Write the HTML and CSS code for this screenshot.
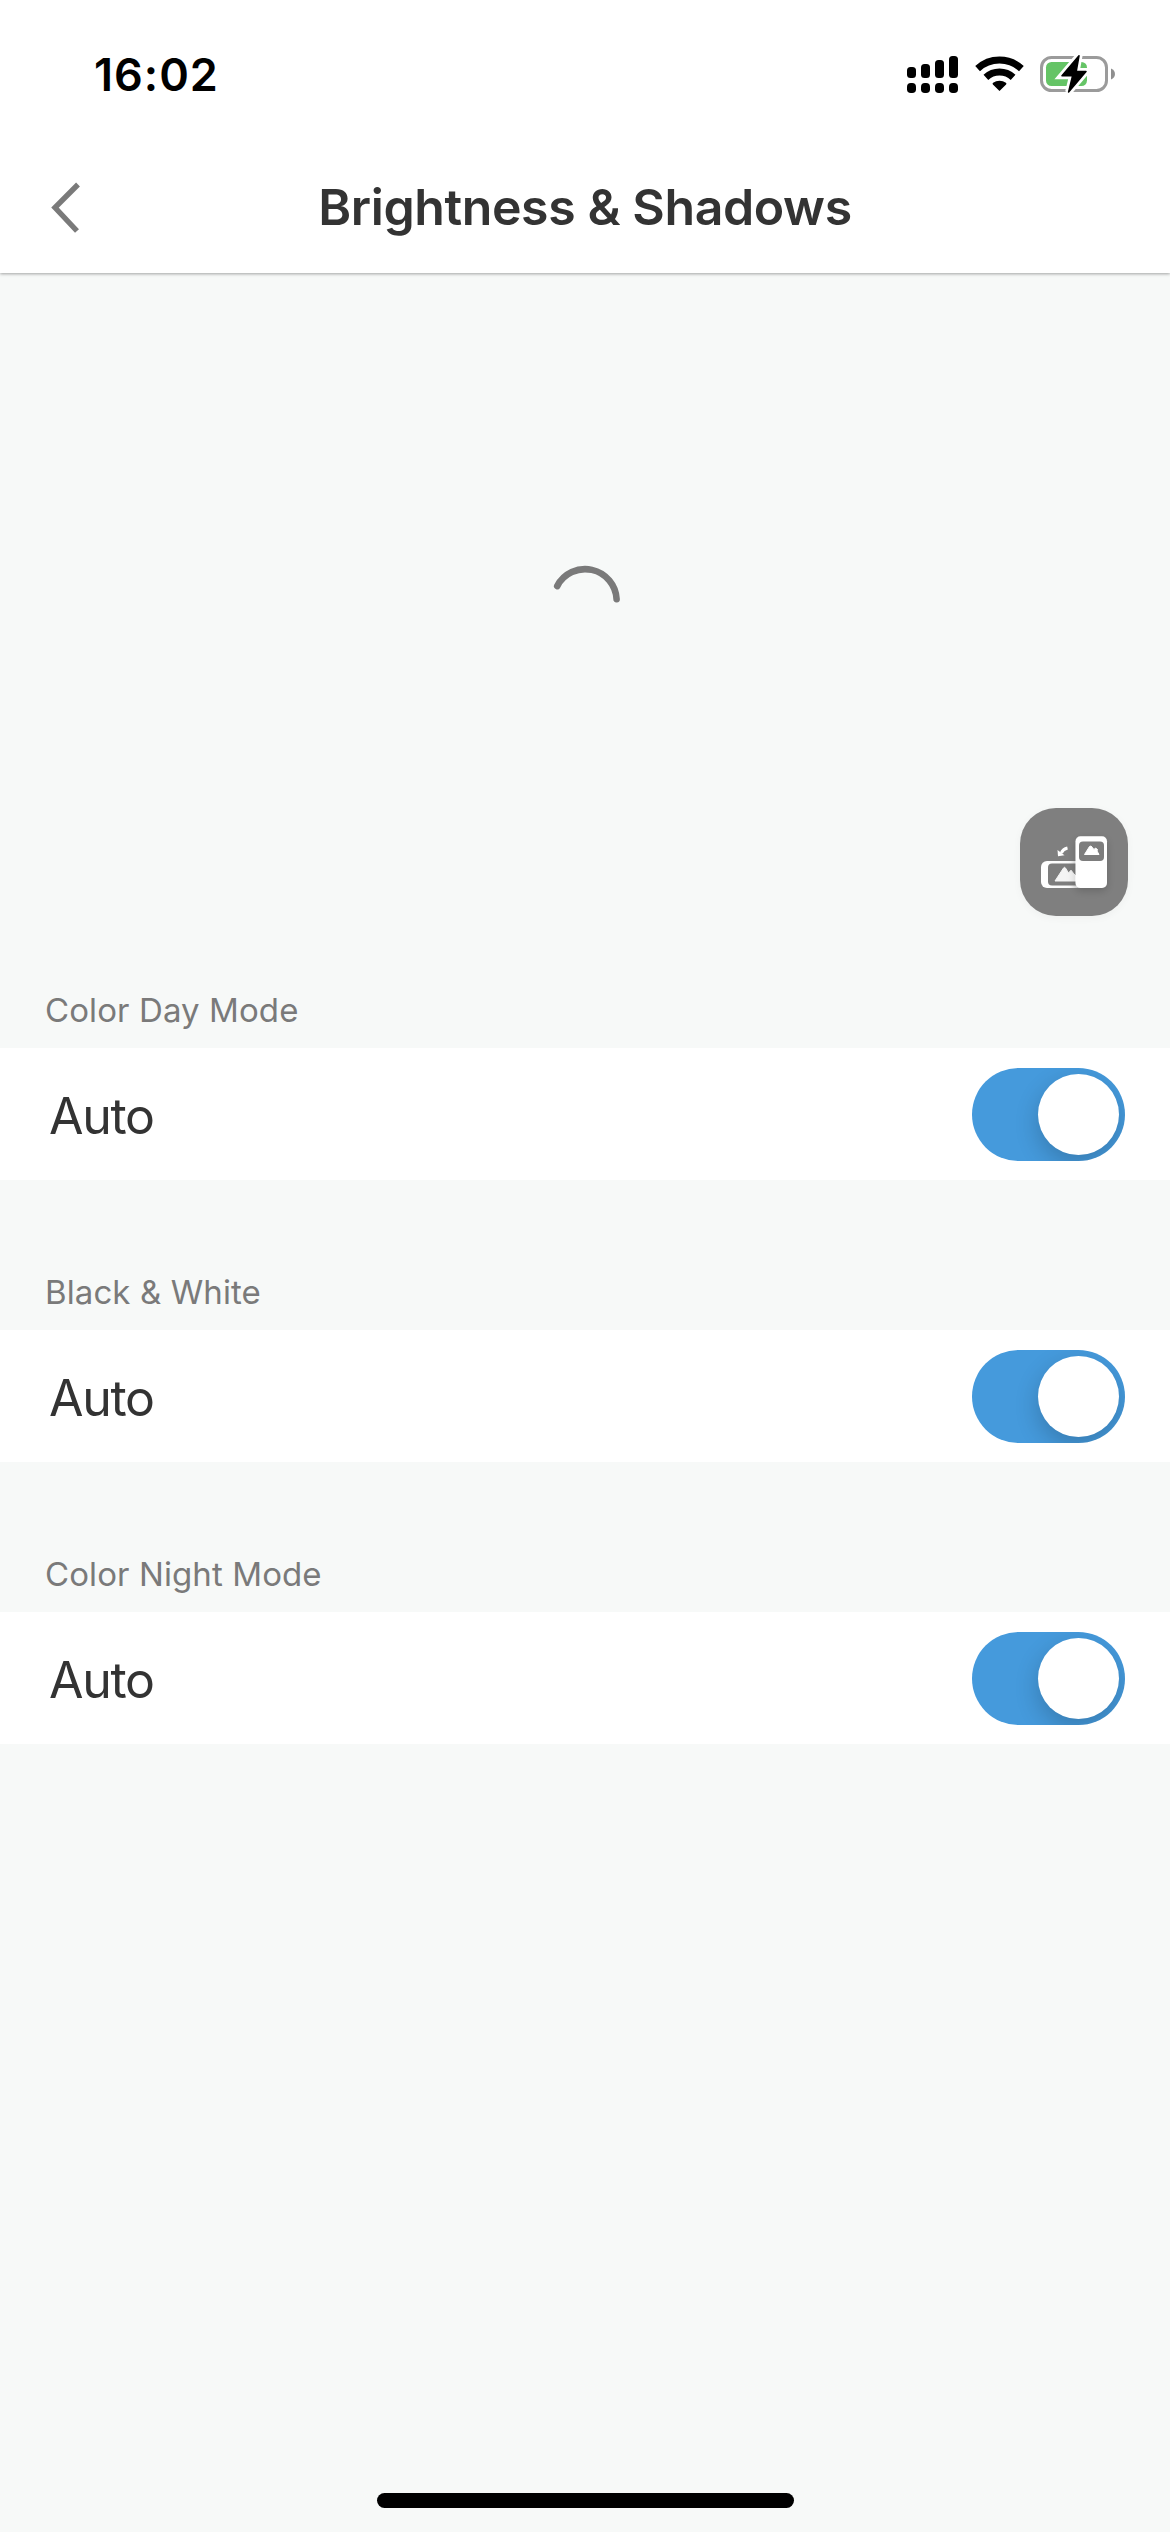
FILE: index.html
```html
<!DOCTYPE html>
<html lang="en">

<head>
    <meta charset="UTF-8">
    <meta name="viewport" content="width=device-width, initial-scale=1.0">
    <title>Brightness &amp; Shadows</title>
    <link rel="stylesheet" href="styles.css">
</head>

<body>
    <div class="status">
        <span class="time">16:02</span>
        <div class="status-icons">
            <svg class="signal" width="51" height="40" viewBox="0 0 51 40">
                <rect x="0" y="12" width="9" height="11" rx="3.5" />
                <rect x="14" y="9" width="9" height="14" rx="3.5" />
                <rect x="28" y="5" width="9" height="18" rx="3.5" />
                <rect x="42" y="1" width="9" height="22" rx="3.5" />
                <rect x="0" y="28" width="9" height="10" rx="3.8" />
                <rect x="14" y="28" width="9" height="10" rx="3.8" />
                <rect x="28" y="28" width="9" height="10" rx="3.8" />
                <rect x="42" y="28" width="9" height="10" rx="3.8" />
            </svg>
            <svg class="wifi" width="50" height="40" viewBox="0 0 50 40">
                <path d="M2.6 13.6a32.3 32.3 0 0 1 43.8 0M10.9 22.4a20 20 0 0 1 27.2 0" fill="none" stroke="#000" stroke-width="7" />
                <path d="M24.5 36l-6.6-6.6q-.8-.9.2-1.6a10.6 10.6 0 0 1 12.8 0q1 .7.2 1.6z" />
            </svg>
            <svg class="battery" width="76" height="40" viewBox="0 0 76 40">
                <rect x="1.5" y="2.5" width="65" height="33" rx="10" fill="none" stroke="#9b9b9b" stroke-width="3" />
                <path d="M71 13.500c5.300 2 5.300 9 0 11z" fill="#8f8f8f" />
                <rect x="6" y="7" width="41" height="24" rx="5.500" fill="#65c466" />
                <path class="bolt-edge" d="M39 .8L22 20.800H32.600L28.600 37L46 16.500H36.200z" />
                <path d="M39 .8L22 20.800H32.600L28.600 37L46 16.500H36.200z" stroke="#000" stroke-width="1.500" stroke-linejoin="round" />
            </svg>
        </div>
    </div>

    <div class="header">
        <svg class="back" width="30" height="52" viewBox="0 0 30 52">
            <path d="M28 3.500L5 26.500L27 50" fill="none" stroke="#7a7a7a" stroke-width="5.400" />
        </svg>
        <h1>Brightness &amp; Shadows</h1>
    </div>

    <div class="preview">
        <svg class="loading" width="72" height="72" viewBox="0 0 72 72">
            <path d="M8.200 22.100A31.500 31.500 0 0 1 67.600 35.200" fill="none" stroke="#7a7a7a" stroke-width="6.600" stroke-linecap="round" />
        </svg>
        <div class="rotate">
            <svg width="108" height="108" viewBox="0 0 108 108">
                <defs>
                    <linearGradient id="shade">
                        <stop offset="0" stop-color="#fff" />
                        <stop offset=".75" stop-color="#fafafa" />
                        <stop offset="1" stop-color="#d5d5d5" />
                    </linearGradient>
                    <filter id="soft" x="-60%" y="-60%" width="220%" height="220%">
                        <feDropShadow dx="0" dy="3" stdDeviation="4" flood-color="#000" flood-opacity=".18" />
                    </filter>
                </defs>
                <path d="M27 53H60V80H27a6 6 0 0 1-6-6V59a6 6 0 0 1 6-6z" fill="url(#shade)" />
                <path d="M32 55.500H60V77.500H32a4 4 0 0 1-4-4V59.500a4 4 0 0 1 4-4z" fill="#7d7d7d" />
                <path d="M35 73L43.500 60Q44.500 58.600 45.500 60L48.500 65L51 62.200L54 66L56 68V73z" fill="#f4f4f4" stroke="#f4f4f4" stroke-linejoin="round" />
                <g filter="url(#soft)">
                    <rect x="55.500" y="28.300" width="31.500" height="51.700" rx="5" fill="#fff" />
                </g>
                <rect x="59" y="33.500" width="25" height="19.500" rx="4" fill="#7d7d7d" />
                <path d="M64.500 46.500L69.500 38.500L71 38L74 41.500L75.500 40L77.500 41.500L77 43L79 46.500z" fill="#fff" stroke="#fff" stroke-linejoin="round" />
                <path d="M47.500 40Q43 41 41.300 45" fill="none" stroke="#fff" stroke-width="3" />
                <path d="M37.500 42L38 48.300L44.500 47.200z" fill="#fff" />
            </svg>
        </div>
    </div>

    <div class="group">
        <h2>Color Day Mode</h2>
        <div class="row">
            <span class="name">Auto</span>
            <div class="switch"><i></i></div>
        </div>
    </div>
    <div class="group">
        <h2>Black &amp; White</h2>
        <div class="row">
            <span class="name">Auto</span>
            <div class="switch"><i></i></div>
        </div>
    </div>
    <div class="group">
        <h2>Color Night Mode</h2>
        <div class="row">
            <span class="name">Auto</span>
            <div class="switch"><i></i></div>
        </div>
    </div>

    <div class="home"></div>
</body>

</html>
```
FILE: styles.css
```css
* {
    box-sizing: border-box;
    margin: 0;
    padding: 0;
}

body {
    display: flex;
    flex-direction: column;
    height: 2532px;
    overflow: hidden;
    background-color: #f7f9f8;
    color: #333;
    font-family: Inter, "Liberation Sans", sans-serif;
}

svg {
    display: block;
    flex: none;
}

/* status bar */
.status {
    display: flex;
    justify-content: space-between;
    height: 150px;
    padding: 55px 54px 0 94px;
    background-color: #fff;
    color: #000;
}

.time {
    height: 40px;
    line-height: 40px;
    font-size: 45px;
    font-weight: 600;
    letter-spacing: 1px;
}

.status-icons {
    display: flex;
}

.wifi {
    margin-left: 17px;
}

.battery {
    margin-left: 15px;
}

.bolt-edge {
    fill: #fff;
    stroke: #fff;
    stroke-width: 7px;
}

/* title bar */
.header {
    display: grid;
    grid-template-columns: 120px 1fr 120px;
    align-items: center;
    height: 123px;
    padding-bottom: 9px;
    background-color: #fff;
    box-shadow: 0 1px 3px rgba(0, 0, 0, .35);
    /* shadow only below the bar */
    clip-path: inset(0 0 -6px 0);
}

.back {
    margin-left: 50px;
}

.header h1 {
    text-align: center;
    white-space: nowrap;
    line-height: 60px;
    font-size: 50px;
    font-weight: 600;
    letter-spacing: -.4px;
}

/* video area */
.preview {
    display: flex;
    flex-direction: column;
    height: 685px;
    padding: 291px 42px 0 0;
}

.loading {
    margin-left: 549px;
}

.rotate {
    align-self: flex-end;
    width: 108px;
    height: 108px;
    margin-top: 172px;
    border-radius: 36px;
    background-color: #7f7f7f;
    box-shadow: 0 2px 8px rgba(0, 0, 0, .04);
}

/* settings */
.group {
    height: 282px;
}

.group h2 {
    height: 90px;
    padding: 32px 0 0 45px;
    line-height: 40px;
    color: #7a7a7a;
    font-size: 33px;
    font-weight: 400;
    letter-spacing: .1px;
}

.row {
    display: flex;
    justify-content: space-between;
    align-items: center;
    height: 132px;
    padding: 0 45px 0 49px;
    background-color: #fff;
}

.name {
    padding-top: 4px;
    line-height: 60px;
    font-size: 50px;
    letter-spacing: -1.3px;
}

.switch {
    display: flex;
    justify-content: flex-end;
    align-items: center;
    width: 153px;
    height: 93px;
    padding-right: 6px;
    overflow: hidden;
    border-radius: 47px;
    background-color: #459adc;
}

.switch i {
    width: 81px;
    height: 81px;
    border-radius: 50%;
    background-color: #fff;
    box-shadow: 0 9px 24px rgba(0, 0, 0, .2);
}

.home {
    width: 417px;
    height: 15px;
    margin: auto auto 24px;
    border-radius: 8px;
    background-color: #000;
}
```
